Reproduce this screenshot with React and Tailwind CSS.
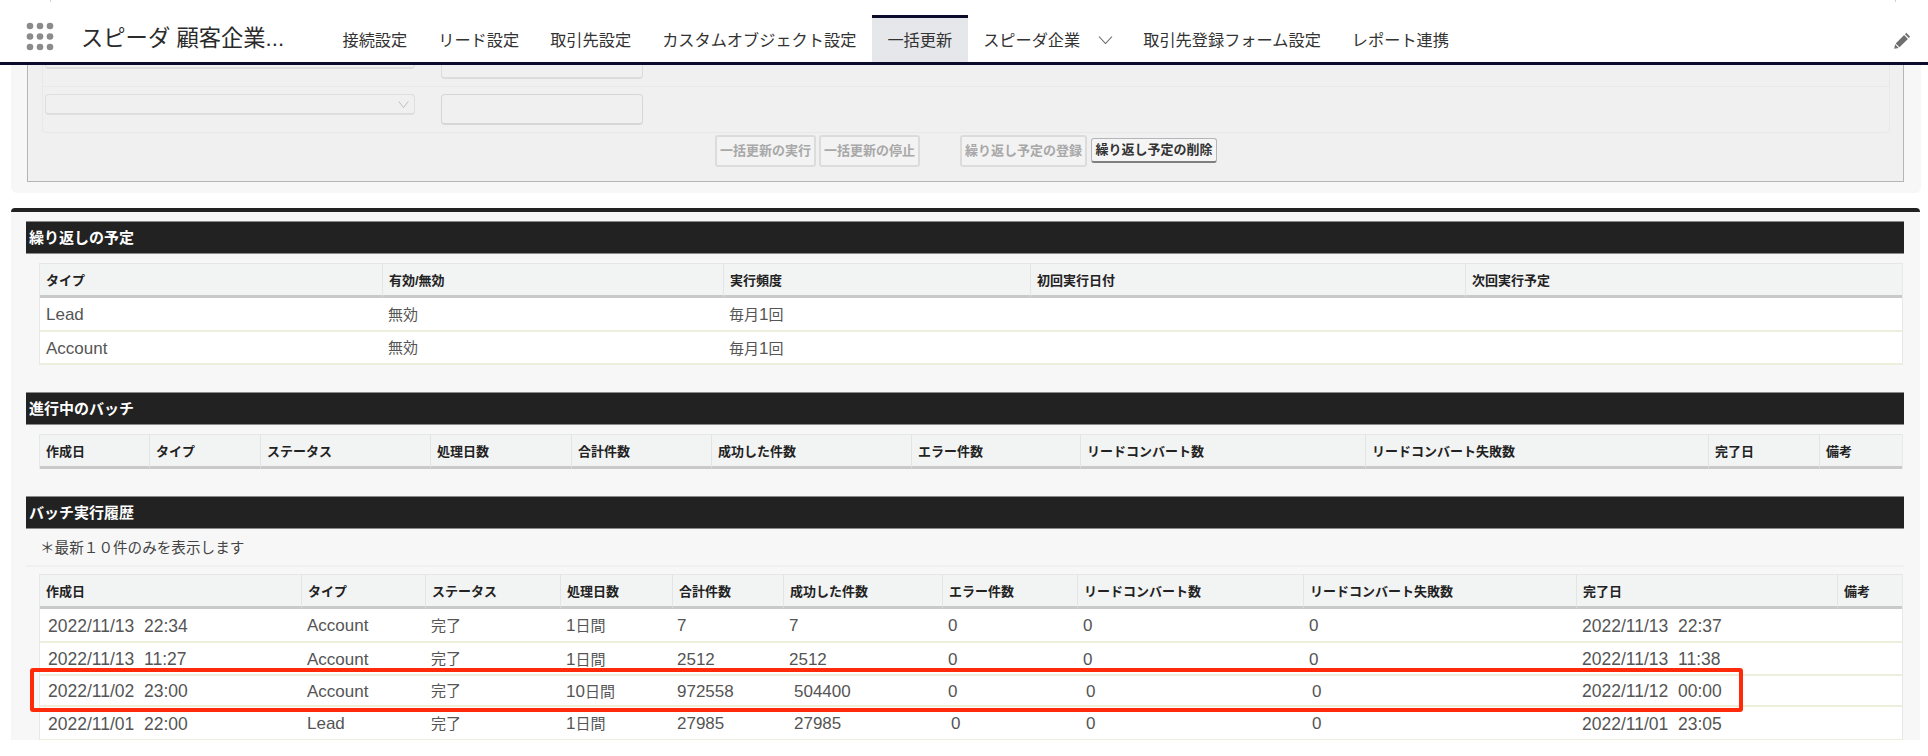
const font = { fontFamily: '"Liberation Sans", "Noto Sans CJK JP", sans-serif' };

const tabs = [
  { label: "接続設定" },
  { label: "リード設定" },
  { label: "取引先設定" },
  { label: "カスタムオブジェクト設定" },
  { label: "一括更新", active: true },
  { label: "スピーダ企業", menu: true },
  { label: "取引先登録フォーム設定" },
  { label: "レポート連携" },
];

const scheduleCols = [
  { label: "タイプ", w: "w-[342px]" },
  { label: "有効/無効", w: "w-[341px]" },
  { label: "実行頻度", w: "w-[307px]" },
  { label: "初回実行日付", w: "w-[435px]" },
  { label: "次回実行予定", w: "w-[437px]" },
];

const runningCols = [
  { label: "作成日", w: "w-[109px]" },
  { label: "タイプ", w: "w-[111px]" },
  { label: "ステータス", w: "w-[170px]" },
  { label: "処理日数", w: "w-[141px]" },
  { label: "合計件数", w: "w-[140px]" },
  { label: "成功した件数", w: "w-[200px]" },
  { label: "エラー件数", w: "w-[169px]" },
  { label: "リードコンバート数", w: "w-[285px]" },
  { label: "リードコンバート失敗数", w: "w-[343px]" },
  { label: "完了日", w: "w-[111px]" },
  { label: "備考", w: "w-[83px]" },
];

const historyCols = [
  { label: "作成日", w: "w-[261px]" },
  { label: "タイプ", w: "w-[124px]" },
  { label: "ステータス", w: "w-[135px]" },
  { label: "処理日数", w: "w-[112px]" },
  { label: "合計件数", w: "w-[111px]" },
  { label: "成功した件数", w: "w-[159px]" },
  { label: "エラー件数", w: "w-[135px]" },
  { label: "リードコンバート数", w: "w-[226px]" },
  { label: "リードコンバート失敗数", w: "w-[273px]" },
  { label: "完了日", w: "w-[261px]" },
  { label: "備考", w: "w-[65px]" },
];

const history = [
  { h: "h-[34px]", cells: ["2022/11/13  22:34", "Account", "完了", "1日間", "7", "7", "0", "0", "0", "2022/11/13  22:37", ""] },
  { h: "h-[33px]", cells: ["2022/11/13  11:27", "Account", "完了", "1日間", "2512", "2512", "0", "0", "0", "2022/11/13  11:38", ""] },
  { h: "h-[31px]", nudged: true, cells: ["2022/11/02  23:00", "Account", "完了", "10日間", "972558", "504400", "0", "0", "0", "2022/11/12  00:00", ""] },
  { h: "h-[34px]", nudged: true, cells: ["2022/11/01  22:00", "Lead", "完了", "1日間", "27985", "27985", "0", "0", "0", "2022/11/01  23:05", ""] },
];

function GridIcon() {
  const spots = [30, 40, 50];
  const rows = [26, 36.5, 47];
  return (
    <svg width="60" height="47" viewBox="0 15 60 47" className="shrink-0">
      {rows.map((y) => spots.map((x) => <circle key={`${x}-${y}`} cx={x} cy={y} r="3.3" fill="#8b8b8b" />))}
    </svg>
  );
}

function Chevron({ w = 15, h = 8, color = "#666" }) {
  return (
    <svg width={w} height={h} viewBox="0 0 15 8" preserveAspectRatio="none">
      <polyline points="1,0.5 7.5,7.5 14,0.5" fill="none" stroke={color} strokeWidth="1.1" />
    </svg>
  );
}

function PencilIcon() {
  return (
    <svg width="17" height="17" viewBox="0 0 16 16">
      <path d="M11.6 0.8 15.2 4.4 13.9 5.7 10.3 2.1Z M9.5 2.9 13.1 6.5 5.2 14.4 1.6 10.8Z M1 11.6 4.4 15 0.2 15.8Z" fill="#6f6f6f" />
    </svg>
  );
}

function Header() {
  return (
    <header className="relative flex h-[65px] items-stretch border-b-[3px] border-[#0b0b2c] bg-white pt-[15px]">
      <span className="absolute left-[50px] top-0 h-[2px] w-px bg-[#d0d0d0]" />
      <span className="absolute left-[1895px] top-0 h-[2px] w-px bg-[#d0d0d0]" />
      <div className="flex w-[81px] items-start">
        <GridIcon />
      </div>
      <div className="flex w-[246px] items-center text-[22.3px] text-[#2b2b2b]">スピーダ 顧客企業...</div>
      {tabs.map((tab) => (
        <div
          key={tab.label}
          className={`flex items-center border-t-[3px] px-[15.5px] text-[16.2px] ${
            tab.active ? "border-[#0b0b2c] bg-[#e6e7ea] text-[#333]" : "border-transparent text-[#333]"
          }`}
        >
          {tab.label}
          {tab.menu && (
            <span className="ml-[18px] mr-[-1px]">
              <Chevron />
            </span>
          )}
        </div>
      ))}
      <div className="absolute left-[1894px] top-[32px]">
        <PencilIcon />
      </div>
    </header>
  );
}

function FormButton({ label, w, on }) {
  return on ? (
    <button className={`${w} mt-[3px] h-[25px] rounded-[3px] border border-b-2 border-[#b5b5b9] border-b-[#7f7f7f] bg-[#f5f5f5] text-[13px] font-bold text-[#333]`}>
      {label}
    </button>
  ) : (
    <button className={`${w} h-[32px] rounded-[3px] border-2 border-[#dcdcdc] bg-[#f3f3f3] text-[13px] font-bold text-[#a8a8a8]`}>
      {label}
    </button>
  );
}

function BulkForm() {
  return (
    <section className="ml-[11px] w-[1910px] rounded-b-md bg-[#f7f7f7] pb-[11px]">
      <div className="ml-[16px] h-[117px] w-[1877px] border-x border-b border-[#b5b5b5] bg-[#f0f0f0] pl-[14px] pr-[13px]">
        <div className="h-[68px] rounded-b border-x border-b border-[#e8e8e8]">
          <div className="flex h-[22px] items-start gap-[26px] border-b border-[#e8e8e8] pl-[2px]">
            <div className="h-[4px] w-[370px] rounded-b border-x border-b-2 border-[#dedede]" />
            <div className="h-[14px] w-[202px] rounded-b border-x border-b-2 border-[#dcdcdc]" />
          </div>
          <div className="flex items-start gap-[26px] pl-[2px] pt-[7px]">
            <div className="flex h-[21px] w-[370px] items-center justify-end rounded border border-b-2 border-[#dedede] pr-[5px]">
              <Chevron w={11} h={7} color="#b9b9b9" />
            </div>
            <div className="h-[31px] w-[202px] rounded border border-b-2 border-[#d6d6d6]" />
          </div>
        </div>
        <div className="ml-[673px] mt-[2px] flex items-start">
          <FormButton label="一括更新の実行" w="w-[101px]" />
          <span className="w-[3px]" />
          <FormButton label="一括更新の停止" w="w-[101px]" />
          <span className="w-[40px]" />
          <FormButton label="繰り返し予定の登録" w="w-[127px]" />
          <span className="w-[4px]" />
          <FormButton label="繰り返し予定の削除" w="w-[126px]" on />
        </div>
      </div>
    </section>
  );
}

function SectionTitle({ children, mt }) {
  return (
    <h2 className={`${mt} ml-[15px] flex h-[33px] w-[1878px] items-center border-y border-y-[#8a8a8a] bg-[#222222] pl-[3px] pt-[2px] text-[15px] font-bold text-white`}>
      {children}
    </h2>
  );
}

function HeadRow({ cols }) {
  return (
    <thead>
      <tr>
        {cols.map((col, i) => (
          <th
            key={col.label}
            className={`${col.w} h-[35px] border-b-[3px] border-t border-b-[#c9c9c9] border-t-[#e6e6e6] bg-[#f2f3f3] pl-[6px] pt-[2px] text-left text-[13px] font-bold text-[#222] ${
              i === 0 ? "border-l-0" : "border-l border-l-[#e4e4e4]"
            }`}
          >
            {col.label}
          </th>
        ))}
      </tr>
    </thead>
  );
}

function Cell({ text, className = "" }) {
  // 和文は15px、英数字は少し大きく見える
  const parts = text.split(/([\x20-\x7e]+)/).filter(Boolean);
  return (
    <td className={`whitespace-pre border-b-2 border-b-[#eeeedd] bg-white pt-[2px] text-[15px] text-[#555] ${className || "pl-[6px]"}`}>
      {parts.map((part, i) =>
        /^[\x20-\x7e]+$/.test(part) ? (
          <span key={i} className={part.includes("/") ? "text-[17.5px]" : "text-[17px]"}>{part}</span>
        ) : (
          <span key={i}>{part}</span>
        )
      )}
    </td>
  );
}

function ScheduleTable() {
  return (
    <table className="ml-[28px] mt-[9px] w-[1862px] table-fixed border-separate border-spacing-0 border-x border-[#e8e8e8]">
      <HeadRow cols={scheduleCols} />
      <tbody>
        <tr className="h-[34px]">
          {["Lead", "無効", "毎月1回", "", ""].map((t, i) => <Cell key={i} text={t} />)}
        </tr>
        <tr className="h-[33px]">
          {["Account", "無効", "毎月1回", "", ""].map((t, i) => <Cell key={i} text={t} />)}
        </tr>
      </tbody>
    </table>
  );
}

function RunningTable() {
  return (
    <table className="ml-[28px] mt-[9px] w-[1862px] table-fixed border-separate border-spacing-0 border-x border-[#e8e8e8]">
      <HeadRow cols={runningCols} />
    </table>
  );
}

function nudge(row, i) {
  if (i === 0) return "pl-[8px]";
  if (i === 4) return "pl-[5px]";
  if (!row.nudged) return "";
  if (i === 5) return "pl-[11px]";
  if (i === 6) return row.h === "h-[34px]" ? "pl-[9px]" : "pl-[6px]";
  if (i === 7 || i === 8) return "pl-[9px]";
  return "";
}

function HistoryTable() {
  return (
    <table className="ml-[28px] mt-[7px] w-[1862px] table-fixed border-separate border-spacing-0 border-x border-[#e8e8e8]">
      <HeadRow cols={historyCols} />
      <tbody>
        {history.map((row) => (
          <tr key={row.cells[0]} className={row.h}>
            {row.cells.map((t, i) => <Cell key={i} text={t} className={nudge(row, i)} />)}
          </tr>
        ))}
      </tbody>
    </table>
  );
}

export default function App() {
  return (
    <div className="relative h-[756px] w-[1928px] overflow-hidden bg-white" style={font}>
      <Header />
      <BulkForm />
      <main className="ml-[11px] mt-[15px] h-[532px] w-[1909px] overflow-hidden rounded-t border-t-[4px] border-[#222] bg-[#f7f7f7]">
        <SectionTitle mt="mt-[9px]">繰り返しの予定</SectionTitle>
        <ScheduleTable />
        <SectionTitle mt="mt-[27px]">進行中のバッチ</SectionTitle>
        <RunningTable />
        <SectionTitle mt="mt-[27px]">バッチ実行履歴</SectionTitle>
        <div className="ml-[15px] flex h-[38px] w-[1878px] items-center border-b-2 border-[#f0f0f0] pl-[14px] pt-[4px] text-[14.6px] text-[#444]">
          ＊最新１０件のみを表示します
        </div>
        <HistoryTable />
      </main>
      {/* 赤枠の注釈 */}
      <div className="absolute left-[30px] top-[668px] h-[44px] w-[1713px] rounded-[3px] border-4 border-[#ff2a0a]" />
    </div>
  );
}
